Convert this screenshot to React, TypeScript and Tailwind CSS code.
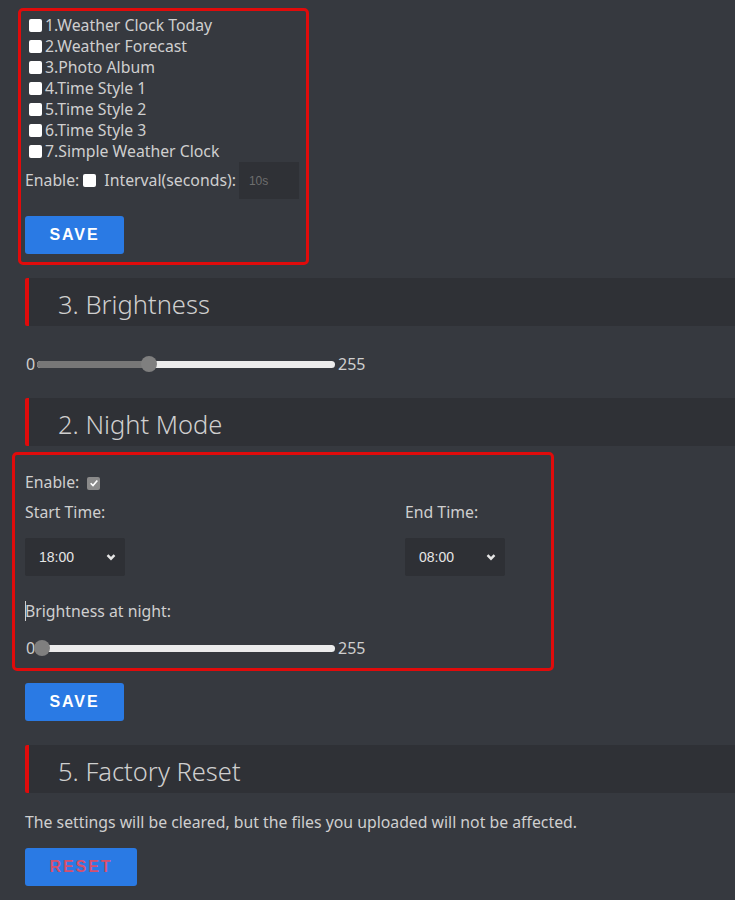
import React from "react";

const pages = [
  "1.Weather Clock Today",
  "2.Weather Forecast",
  "3.Photo Album",
  "4.Time Style 1",
  "5.Time Style 2",
  "6.Time Style 3",
  "7.Simple Weather Clock",
];

function Box({ checked = false }: { checked?: boolean }) {
  if (checked) {
    return (
      <span className="inline-flex w-[13px] h-[13px] rounded-[2px] bg-[#8a8a8a] items-center justify-center">
        <svg viewBox="0 0 12 12" className="w-[10px] h-[10px]">
          <path d="M2 6.3 L4.8 9 L10 3" fill="none" stroke="#fff" strokeWidth="2" />
        </svg>
      </span>
    );
  }
  return <span className="inline-block w-[13px] h-[13px] rounded-[2px] bg-white" />;
}

function Band({ title }: { title: string }) {
  return (
    <div className="h-[48px] bg-[#2f3136] border-l-4 border-[#e00b0b] rounded-l-[2px] flex items-center pl-[29px] pt-[5px]">
      <h2 className="text-[25.5px] font-light text-[#cfcfcf] leading-none">{title}</h2>
    </div>
  );
}

function Slider({ pos }: { pos: number }) {
  return (
    <div className="flex items-center h-[24px] text-[16px] text-[#cfcfcf]">
      <span className="w-[12px] pl-[1px]">0</span>
      <div className="relative w-[298px] h-[7px] rounded-full bg-[#ececec]">
        <div className="h-full rounded-full bg-[#777]" style={{ width: pos }} />
        <div
          className="absolute top-1/2 w-[16px] h-[16px] -mt-[8px] -ml-[8px] rounded-full bg-[#7f7f7f]"
          style={{ left: pos }}
        />
      </div>
      <span className="ml-[3px]">255</span>
    </div>
  );
}

function Select({ value }: { value: string }) {
  return (
    <div className="w-[100px] h-[38px] bg-[#2e3035] rounded-[2px] flex items-center justify-between pl-[14px] pr-[9px] font-['Liberation_Sans',sans-serif] text-[14px] text-[#e6e6e6]">
      <span>{value}</span>
      <svg viewBox="0 0 10 10" className="w-[10px] h-[10px]">
        <path d="M1.5 3.2 L5 6.7 L8.5 3.2" fill="none" stroke="#e6e6e6" strokeWidth="2.4" />
      </svg>
    </div>
  );
}

function Btn({ label, red = false }: { label: string; red?: boolean }) {
  return (
    <button
      className={`h-[38px] rounded-[3px] bg-[#2a7ae4] font-['Liberation_Sans',sans-serif] font-bold text-[16px] tracking-[0.12em] ${
        red ? "w-[112px] text-[#d4506e] tracking-[0.2em]" : "w-[99px] text-white"
      }`}
    >
      {label}
    </button>
  );
}

export default function App() {
  return (
    <div className="min-h-screen bg-[#36393f] pl-[25px] pt-[8px] pb-[20px] font-['Noto_Sans',sans-serif] text-[15.8px] text-[#cfcfcf]">
      <div className="ml-[-7px] w-[291px] border-[3px] border-[#e00b0b] rounded-[5px] pl-[4px] pt-[4px] pb-[8px]">
        {pages.map((p) => (
          <div key={p} className="flex items-center h-[21px]">
            <span className="ml-[4px] mr-[3px] flex">
              <Box />
            </span>
            <span>{p}</span>
          </div>
        ))}
        <div className="flex items-center h-[37px]">
          <span>Enable:</span>
          <span className="ml-[4px] mr-[8px] flex">
            <Box />
          </span>
          <span>Interval(seconds):</span>
          <div className="ml-[3px] w-[60px] h-[37px] bg-[#2f3136] flex items-center pl-[10px] font-['Liberation_Sans',sans-serif] text-[12px] text-[#6e6e6e]">
            10s
          </div>
        </div>
        <div className="mt-[17px]">
          <Btn label="SAVE" />
        </div>
      </div>

      <div className="mt-[13px]">
        <Band title="3. Brightness" />
      </div>
      <div className="mt-[26px]">
        <Slider pos={112} />
      </div>

      <div className="mt-[22px]">
        <Band title="2. Night Mode" />
      </div>

      <div className="mt-[6px] ml-[-13px] w-[542px] border-[3px] border-[#e00b0b] rounded-[5px] pl-[10px] pt-[17px] pb-[8px]">
        <div className="flex items-center h-[22px]">
          <span>Enable:</span>
          <span className="ml-[8px] flex">
            <Box checked />
          </span>
        </div>
        <div className="flex mt-[7px]">
          <div className="w-[380px]">
            <div className="h-[22px] leading-[22px]">Start Time:</div>
            <div className="mt-[15px]">
              <Select value="18:00" />
            </div>
          </div>
          <div>
            <div className="h-[22px] leading-[22px]">End Time:</div>
            <div className="mt-[15px]">
              <Select value="08:00" />
            </div>
          </div>
        </div>
        <div className="mt-[24px] h-[22px] leading-[22px] flex items-center">
          <span className="inline-block w-px h-[20px] bg-[#cfcfcf] -mr-px" />
          <span>Brightness at night:</span>
        </div>
        <div className="mt-[14px]">
          <Slider pos={5} />
        </div>
      </div>

      <div className="mt-[12px]">
        <Btn label="SAVE" />
      </div>

      <div className="mt-[24px]">
        <Band title="5. Factory Reset" />
      </div>
      <p className="mt-[18px] h-[22px] leading-[22px]">
        The settings will be cleared, but the files you uploaded will not be affected.
      </p>
      <div className="mt-[15px]">
        <Btn label="RESET" red />
      </div>
    </div>
  );
}
